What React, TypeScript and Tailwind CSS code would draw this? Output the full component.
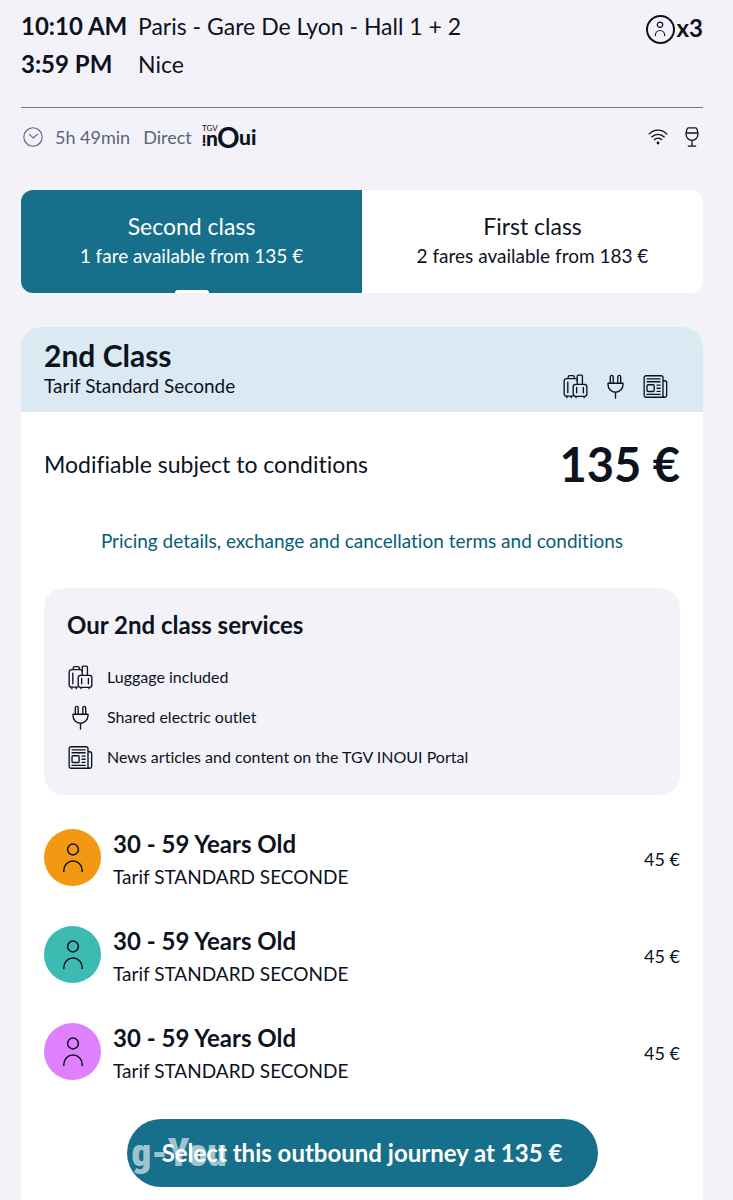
import React, { useState } from 'react';

type IconProps = { className?: string; strokeWidth?: number };

const PersonIcon = ({ className, strokeWidth = 1.5 }: IconProps) => (
  <svg viewBox="0 0 24 32" fill="none" stroke="currentColor" strokeWidth={strokeWidth} className={className} aria-hidden="true">
    <circle cx="12" cy="7.5" r="5.4" />
    <path d="M2.8 30v-1.8a9.2 9.2 0 0 1 18.4 0V30" />
  </svg>
);

const ClockIcon = () => (
  <svg viewBox="0 0 20 20" fill="none" stroke="currentColor" strokeWidth="1.1" className="w-5 h-5" aria-hidden="true">
    <circle cx="10" cy="10" r="9.2" />
    <path d="M6.2 7.2l4 3.8 4.8-4.2" />
  </svg>
);

const WifiIcon = () => (
  <svg viewBox="0 0 20 16" fill="none" stroke="currentColor" strokeWidth="1.3" className="w-5 h-4" aria-hidden="true">
    <path d="M.8 5.4C6-.2 14-.2 19.2 5.4M3.4 8.3c3.8-4 9.4-4 13.2 0M6 11c2.3-2.4 5.7-2.4 8 0" />
    <circle cx="10" cy="14" r="1.4" fill="currentColor" stroke="none" />
  </svg>
);

const GlassIcon = () => (
  <svg viewBox="0 0 14 20" fill="none" stroke="currentColor" strokeWidth="1.3" className="w-3.5 h-5" aria-hidden="true">
    <path d="M3.6.8h6.8q1.3 0 1.7 1.6l.8 3.4a6 6.4 0 1 1-11.800 0l.8-3.400Q2.300.8 3.600.8zM1.200 6h11.600M7 13.200v6M2.800 19.200h8.400" />
  </svg>
);

const LuggageIcon = () => (
  <svg viewBox="0 0 26 26" fill="none" stroke="currentColor" strokeWidth="1.4" strokeLinecap="round" strokeLinejoin="round" className="w-[25px] h-[25px]" aria-hidden="true">
    <path d="M10 23H3.6a2.4 2.4 0 0 1-2.4-2.4V7.2a2.4 2.4 0 0 1 2.4-2.4h9.2a2 2 0 0 1 2 2v3.600" />
    <path d="M5.4 4.6V3.2A1.5 1.5 0 0 1 6.9 1.7h3.4a1.5 1.5 0 0 1 1.5 1.5v1.4" />
    <path d="M14.8 6.6V2.2a1 1 0 0 1 1-1h3.4a1 1 0 0 1 1 1v8.2" />
    <rect x="10.6" y="10.8" width="14.2" height="12.4" rx="2.4" />
    <path d="M5 8.6v11M14.2 14v5.6M21.2 14v5.6M4 23.4v1.2M8.6 23.4v1.2M13.6 23.6v1M22 23.6v1" />
  </svg>
);

const PlugIcon = () => (
  <svg viewBox="0 0 26 26" fill="none" stroke="currentColor" strokeWidth="1.4" strokeLinecap="round" strokeLinejoin="round" className="w-[25px] h-[25px]" aria-hidden="true">
    <path d="M5.2 9.6h15.6v1.6a7.8 7.8 0 0 1-15.6 0zM13 19.2V25" />
    <path d="M7.6 9.4V3a1.5 1.5 0 0 1 3 0v6.4M15.4 9.4V3a1.5 1.5 0 0 1 3 0v6.4" />
  </svg>
);

const NewsIcon = () => (
  <svg viewBox="0 0 26 26" fill="none" stroke="currentColor" strokeWidth="1.4" strokeLinecap="round" strokeLinejoin="round" className="w-[25px] h-[25px]" aria-hidden="true">
    <path d="M22.6 24.2H3.2a2 2 0 0 1-2-2V3.8a2 2 0 0 1 2-2h15.6a2 2 0 0 1 2 2v18.6a1.9 1.9 0 0 0 3.8 0V9.2a2.2 2.2 0 0 0-2.2-2.2H21" />
    <rect x="4.2" y="11.2" width="7.4" height="7" rx="1" />
    <path d="M4.2 5h13.6M4.2 8.1h13.6M14.6 11.6h3.2M14.6 14.8h3.2M14.6 18h3.2M4.2 21.2h13.6" />
  </svg>
);

const InouiLogo = () => (
  <svg viewBox="0 0 58 28" className="w-[58px] h-7 overflow-visible" fill="currentColor" fontFamily="Lato, sans-serif" role="img" aria-label="TGV inOui">
    <text x="2" y="8" fontSize="8">TGV</text>
    <text x="-6" y="-12" fontSize="15" fontWeight="900" transform="rotate(180)">i</text>
    <text x="6" y="23" fontSize="21" fontWeight="900">n</text>
    <text x="17" y="25" fontSize="28" fontWeight="700">O</text>
    <text x="39" y="22" fontSize="21" fontWeight="900">ui</text>
  </svg>
);

const tabs = [
  { title: "Second class", fare: "1 fare available from 135 €" },
  { title: "First class", fare: "2 fares available from 183 €" }
];

const services = [
  { icon: <LuggageIcon />, label: "Luggage included" },
  { icon: <PlugIcon />, label: "Shared electric outlet" },
  { icon: <NewsIcon />, label: "News articles and content on the TGV INOUI Portal" }
];

const passengers = [
  { age: "30 - 59 Years Old", fare: "Tarif STANDARD SECONDE", price: "45 €", color: "bg-[#f39812]" },
  { age: "30 - 59 Years Old", fare: "Tarif STANDARD SECONDE", price: "45 €", color: "bg-[#3dbbb3]" },
  { age: "30 - 59 Years Old", fare: "Tarif STANDARD SECONDE", price: "45 €", color: "bg-[#df80ff]" }
];

const App = () => {
  const [selected, setSelected] = useState(0);

  return (
    <div className="min-h-screen bg-[#f3f2f8] pl-[21px] pr-[30px] text-[#0c131f] font-['Lato',sans-serif] [font-variant-ligatures:none]">
      {/* Journey */}
      <header className="flex justify-between items-start pt-[7px] pb-6 border-b border-[#6f7490]">
        <div className="grid grid-cols-[117px_auto] text-[23px] leading-[38px]">
          <span className="text-[24px] leading-[38px] font-bold whitespace-nowrap">10:10 AM</span>
          <span>Paris - Gare De Lyon - Hall 1 + 2</span>
          <span className="text-[24px] leading-[38px] font-bold whitespace-nowrap">3:59 PM</span>
          <span>Nice</span>
        </div>
        <div className="flex items-center gap-0.5 pt-[7px]">
          <span className="flex items-center justify-center w-[29px] h-[29px] rounded-full border-2 border-current">
            <PersonIcon className="w-3 h-4" strokeWidth={2.4} />
          </span>
          <span className="text-[24px] leading-7 pb-0.5 font-bold">x3</span>
        </div>
      </header>

      <div className="flex items-center justify-between h-[58px] pl-0.5 pr-1">
        <div className="flex items-center text-[18px] text-[#5b6579]">
          <ClockIcon />
          <span className="ml-3">5h 49min</span>
          <span className="ml-[13px] mr-2">Direct</span>
          <span className="text-[#0c131f]"><InouiLogo /></span>
        </div>
        <div className="flex items-center gap-[17px]">
          <WifiIcon />
          <GlassIcon />
        </div>
      </div>

      {/* Class tabs */}
      <div className="mt-6 grid grid-cols-2 rounded-xl overflow-hidden" role="tablist">
        {tabs.map((t, i) => (
          <button
            key={i}
            role="tab"
            aria-selected={selected === i}
            onClick={() => setSelected(i)}
            className={`flex flex-col items-center h-[103px] pt-5 ${selected === i ? 'bg-[#16708b] text-white' : 'bg-white'}`}
          >
            <span className="text-[23px] leading-8">{t.title}</span>
            <span className="text-[19px] leading-7">{t.fare}</span>
            {selected === i && <span className="mt-auto w-[34px] h-[3px] rounded-t-sm bg-white" />}
          </button>
        ))}
      </div>

      {/* Fare card */}
      <main className="mt-[34px] bg-white rounded-t-[20px] overflow-hidden">
        <div className="flex items-end justify-between h-[85px] bg-[#dbe9f2] pl-[23px] pr-[35px] pb-3">
          <div>
            <h1 className="text-[30px] leading-[34px] font-bold">2nd Class</h1>
            <p className="text-[19px] leading-7">Tarif Standard Seconde</p>
          </div>
          <div className="flex gap-[15px] pb-px">
            <LuggageIcon />
            <PlugIcon />
            <NewsIcon />
          </div>
        </div>

        <div className="px-[23px]">
          <div className="flex items-center justify-between h-[108px] pb-1">
            <p className="text-[23px]">Modifiable subject to conditions</p>
            <p className="text-[47px] font-bold">135 €</p>
          </div>

          <div className="text-center">
            <a href="#terms" className="text-[19px] leading-[42px] text-[#075d78]">
              Pricing details, exchange and cancellation terms and conditions
            </a>
          </div>

          <section className="mt-[26px] h-[207px] rounded-[20px] bg-[#f3f2f8] px-[23px] pt-[21px]">
            <h2 className="text-[24px] leading-8 font-bold mb-4">Our 2nd class services</h2>
            <ul className="pl-px">
              {services.map((s, i) => (
                <li key={i} className="flex items-center gap-3.5 h-10 text-[16px]">
                  {s.icon}
                  {s.label}
                </li>
              ))}
            </ul>
          </section>

          <ul className="mt-[14px]">
            {passengers.map((p, i) => (
              <li key={i} className="flex items-center gap-3 h-[97px]">
                <span className={`flex items-center justify-center w-[57px] h-[57px] rounded-full ${p.color}`}>
                  <PersonIcon className="w-6 h-8" />
                </span>
                <div className="flex-1">
                  <p className="text-[24px] leading-[38px] font-bold">{p.age}</p>
                  <p className="text-[19px] leading-7">{p.fare}</p>
                </div>
                <span className="pt-1 text-[18px]">{p.price}</span>
              </li>
            ))}
          </ul>

          <div className="flex justify-center pt-[19px] pb-[13px]">
            <button className="relative w-[471px] h-[68px] rounded-full overflow-hidden bg-[#16708b] text-white text-[24px] font-bold">
              <span className="absolute left-[5px] top-3.5 text-[39px] leading-10 font-black text-white/60 font-['Roboto_Condensed','Roboto',sans-serif] pointer-events-none" aria-hidden="true">
                g-You
              </span>
              <span className="relative">Select this outbound journey at 135 €</span>
            </button>
          </div>
        </div>
      </main>
    </div>
  );
};

export default App;
